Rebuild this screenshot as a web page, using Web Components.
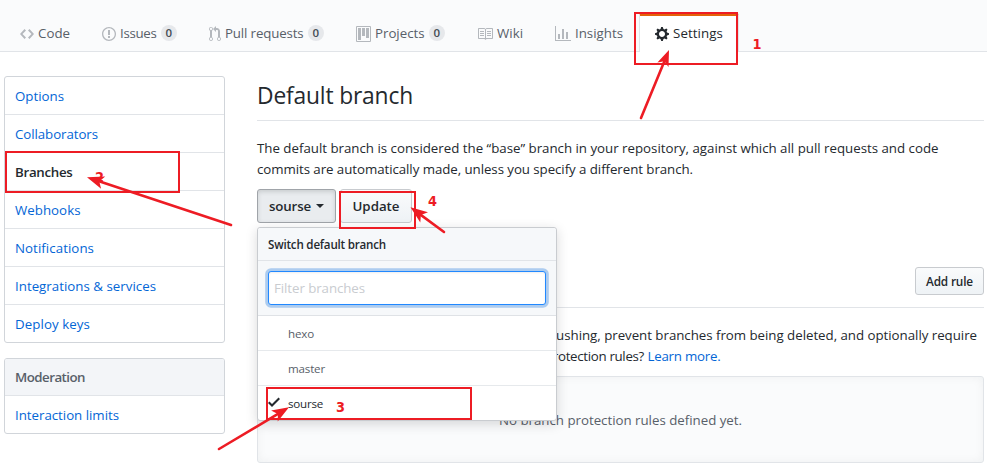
<!DOCTYPE html>
<html lang="en">
<head>
<meta charset="utf-8">
<title>Branches settings</title>
<style>
html,body{margin:0;padding:0}
body{width:987px;height:470px;overflow:hidden;background:#fff;color:#24292e;font:13.3px/21px "Open Sans","Noto Sans",sans-serif}
</style>
</head>
<body>
<settings-page></settings-page>
<script>
const ICONS = {
  code:[14,"M9.5 3L8 4.5 11.5 8 8 11.5 9.5 13 14 8 9.5 3zm-5 0L0 8l4.5 5L6 11.5 2.5 8 6 4.5 4.5 3z"],
  issue:[14,"M7 2.3c3.14 0 5.7 2.56 5.7 5.7s-2.56 5.7-5.7 5.7A5.71 5.71 0 0 1 1.3 8c0-3.14 2.56-5.7 5.7-5.7zM7 1C3.14 1 0 4.14 0 8s3.14 7 7 7 7-3.14 7-7-3.14-7-7-7zm1 3H6v5h2V4zm0 6H6v2h2v-2z"],
  pull:[12,"M11 11.28V5c-.03-.78-.34-1.47-.94-2.06C9.46 2.35 8.78 2.03 8 2H7V0L4 3l3 3V4h1c.27.02.48.11.69.31.21.2.3.42.31.69v6.28A1.993 1.993 0 0 0 10 15a1.993 1.993 0 0 0 1-3.72zm-1 2.92c-.66 0-1.2-.55-1.2-1.2 0-.65.55-1.2 1.2-1.2.65 0 1.2.55 1.2 1.2 0 .65-.55 1.2-1.2 1.2zM4 3c0-1.11-.89-2-2-2a1.993 1.993 0 0 0-1 3.72v6.56A1.993 1.993 0 0 0 2 15a1.993 1.993 0 0 0 1-3.72V4.72c.59-.34 1-.98 1-1.72zm-.8 10c0 .66-.55 1.2-1.2 1.2-.65 0-1.2-.55-1.2-1.2 0-.65.55-1.2 1.2-1.2.65 0 1.2.55 1.2 1.2zM2 4.2C1.34 4.2.8 3.65.8 3c0-.65.55-1.2 1.2-1.2.65 0 1.2.55 1.2 1.2 0 .65-.55 1.2-1.2 1.2z"],
  project:[15,"M10 12h3V2h-3v10zm-4-2h3V2H6v8zm-4 4h3V2H2v12zm-1 1h13V1H1v14zM14 0H1a1 1 0 0 0-1 1v14a1 1 0 0 0 1 1h13a1 1 0 0 0 1-1V1a1 1 0 0 0-1-1z"],
  book:[16,"M3 5h4v1H3V5zm0 3h4V7H3v1zm0 2h4V9H3v1zm11-5h-4v1h4V5zm0 2h-4v1h4V7zm0 2h-4v1h4V9zm2-6v9c0 .55-.45 1-1 1H9.5l-1 1-1-1H2c-.55 0-1-.45-1-1V3c0-.55.45-1 1-1h5.5l1 1 1-1H15c.55 0 1 .45 1 1zm-8 .5L7.5 3H2v9h6V3.5zm7-.5H9.5l-.5.5V12h6V3z"],
  graph:[16,"M16 14v1H0V0h1v14h15zM5 13H3V8h2v5zm4 0H7V3h2v10zm4 0h-2V6h2v7z"],
  gear:[14,"M14 8.77v-1.6l-1.94-.64-.45-1.09.88-1.84-1.13-1.13-1.81.91-1.09-.45-.69-1.92h-1.6l-.63 1.94-1.11.45-1.84-.88-1.13 1.13.91 1.81-.45 1.09L0 7.23v1.59l1.94.64.45 1.09-.88 1.84 1.13 1.13 1.81-.91 1.09.45.69 1.92h1.59l.63-1.94 1.11-.45 1.84.88 1.13-1.13-.92-1.81.47-1.09L14 8.75v.02zM7 11c-1.66 0-3-1.34-3-3s1.34-3 3-3 3 1.34 3 3-1.34 3-3 3z"],
  check:[12,"M12 5l-8 8-4-4 1.5-1.5L4 10l6.5-6.5L12 5z"]
};
const define = (name, html) => customElements.define(name, class extends HTMLElement {
  constructor(){
    super();
    this.attachShadow({mode:"open"}).innerHTML = typeof html === "function" ? html(this) : html;
  }
});

customElements.define("oct-icon", class extends HTMLElement {
  connectedCallback(){
    if (this.shadowRoot) return;
    const [w,d] = ICONS[this.getAttribute("name")];
    this.attachShadow({mode:"open"}).innerHTML =
      `<style>:host{display:block;flex:none;width:${w}px;height:16px}svg{display:block;fill:currentColor}</style>
       <svg width="${w}" height="16" viewBox="0 0 ${w} 16"><path fill-rule="evenodd" d="${d}"/></svg>`;
  }
});

define("nav-tab", `<style>
:host{display:flex;align-items:center;gap:4px;box-sizing:border-box;height:39px;padding:5px 16px 0;color:#586069}
::slotted(oct-icon){color:#b4b8bd}
::slotted(fit-text),::slotted(count-badge){margin-top:-2px}
:host([active]){background:#fff;color:#24292e;border:1px solid #e1e4e8;border-top:3px solid #e36209;border-bottom:0;border-radius:3px 3px 0 0;padding:0 15px}
:host([active]) ::slotted(oct-icon){color:#24292e}
</style><slot></slot>`);

define("count-badge", `<style>
:host{display:block;width:16.5px;height:16px;border-radius:8px;background:#e6e8eb;color:#444d56;font-size:11.5px;font-weight:600;line-height:16px;text-align:center}
</style><slot></slot>`);

define("side-menu", `<style>
:host{display:block;border:1px solid #d1d5da;border-radius:3px;overflow:hidden;background:#fff}
</style><slot></slot>`);

define("menu-item", `<style>
:host{display:block;height:37px;line-height:39px;padding-left:10px;color:#0366d6;border-bottom:1px solid #e1e4e8}
:host(:last-child){border-bottom:0}
:host([selected]){color:#24292e;font-weight:600}
:host([heading]){height:36px;line-height:37px;background:#f3f5f8;color:#586069;font-weight:600}
</style><slot></slot>`);

define("push-button", `<style>
:host{display:flex;align-items:center;justify-content:center;gap:5px;box-sizing:border-box;height:34px;border:1px solid #c8cbcf;border-radius:3px;background:linear-gradient(#fafbfc,#eff3f6 90%);font-weight:600;line-height:20px}
:host([pressed]){background:#e9ecef;border-color:#a0a4a9;box-shadow:inset 0 2px 4px rgba(27,31,35,.15)}
:host([small]){height:28px;font-size:11.8px}
i{display:none;border:4px solid transparent;border-top-color:currentColor;border-bottom:0}
:host([pressed]) i{display:block}
</style><slot></slot><i></i>`);

define("branch-option", `<style>
:host{display:flex;align-items:center;height:34px;padding-left:10px;border-bottom:1px solid #e6e9ec;color:#586069;font-size:11.6px}
:host(:last-child){border-bottom:0}
:host([selected]){color:#24292e}
span{width:20px;height:19px}
</style><span><slot name="icon"></slot></span><slot></slot>`);

define("branch-picker", `<style>
:host{display:block;box-sizing:border-box;width:300px;height:194px;border:1px solid #c9ccd0;border-radius:3px;background:#fff;box-shadow:0 3px 12px rgba(27,31,35,.17)}
header{height:32px;line-height:34px;padding-left:10px;background:#f6f8fa;border-bottom:1px solid #e1e4e8;font-size:11.6px;font-weight:600;border-radius:3px 3px 0 0}
.filter{padding:10px;background:#f6f8fa;border-bottom:1px solid #dfe2e6}
.field{box-sizing:border-box;height:34px;line-height:32px;padding-left:5px;border:1px solid #2188ff;border-radius:3px;background:#fff;box-shadow:inset 0 1px 2px rgba(27,31,35,.075),0 0 0 2.8px rgba(3,102,214,.3);color:#c9ccd0}
</style>
<header><fit-text w="118">Switch default branch</fit-text></header>
<div class="filter"><div class="field"><fit-text w="91">Filter branches</fit-text></div></div>
<branch-option><fit-text w="26">hexo</fit-text></branch-option>
<branch-option><fit-text w="37">master</fit-text></branch-option>
<branch-option selected><oct-icon slot="icon" name="check"></oct-icon><fit-text w="35">sourse</fit-text></branch-option>`);

define("blank-slate", `<style>
:host{display:flex;align-items:center;justify-content:center;box-sizing:border-box;height:87px;padding-top:2px;border:1px solid #e1e4e8;border-radius:3px;background:#fafbfc;box-shadow:inset 0 0 10px rgba(27,31,35,.05);color:#586069}
</style><slot></slot>`);

/* Red call-outs drawn over the page: frames, arrows and step numbers. */
define("callout-layer", () => {
  const arrow = (x1,y1,x2,y2,len=17,half=6.5) => {
    const L=Math.hypot(x2-x1,y2-y1), ux=(x2-x1)/L, uy=(y2-y1)/L;
    const p=(b,s)=>`${(x2-ux*b-uy*s).toFixed(1)},${(y2-uy*b+ux*s).toFixed(1)}`;
    return `<path d="M${x1} ${y1}L${p(len*.7,0)}" stroke-width="2.6" stroke-linecap="round"/><polygon points="${x2},${y2} ${p(len,half)} ${p(len*.76,0)} ${p(len,-half)}" fill="#ed1c24" stroke="none"/>`;
  };
  return `<style>
:host{position:absolute;inset:0;z-index:3;pointer-events:none}
svg{display:block}
text{font:bold 14px "DejaVu Sans",sans-serif;fill:#ed1c24;stroke:none}
</style><svg width="987" height="470" fill="none" stroke="#ed1c24" stroke-width="2">
<text x="752.5" y="49" textLength="9" lengthAdjust="spacingAndGlyphs">1</text><text x="95" y="182" textLength="9" lengthAdjust="spacingAndGlyphs">2</text><text x="336" y="412" textLength="9" lengthAdjust="spacingAndGlyphs">3</text><text x="428" y="206" textLength="9" lengthAdjust="spacingAndGlyphs">4</text>
<rect x="635" y="13" width="102" height="51"/>
<rect x="6" y="152" width="173" height="40"/>
<rect x="340" y="192" width="75" height="36"/>
<rect x="267" y="388" width="204" height="31"/>
${arrow(641,118,669,50,16,6)}${arrow(231,225,87,177.3)}${arrow(444,232,410.5,207.3)}${arrow(219,449,289,407.3)}
</svg>`;
});

define("settings-page", `<style>
:host{display:flex;flex-direction:column;position:relative;width:987px;height:470px;overflow:hidden}
nav{display:flex;align-items:flex-end;box-sizing:border-box;height:52px;padding-left:4px;background:#fafbfc;border-bottom:1px solid #e1e4e8}
nav nav-tab[active]{margin-bottom:-1px}
.body{display:flex;gap:32px;padding:24px 3px 0 4px}
aside{display:flex;flex-direction:column;gap:15px;width:221px}
main{flex:1;min-width:0}
h2{margin:0;height:44px;line-height:39px;border-bottom:1px solid #e1e4e8;font-size:22.8px;font-weight:400}
p{margin:0}
.intro{padding-top:17px;height:51px}
.row{display:flex;gap:4px;position:relative}
branch-picker{position:absolute;left:0;top:38px;z-index:2}
.rules{display:flex;justify-content:flex-end;height:40px;margin-top:44px;border-bottom:1px solid #e1e4e8}
.note{padding:17px 0 9px 291px}
.note p:last-child{margin-left:-3px}
a{color:#0366d6}
</style>
<nav>
<nav-tab><oct-icon name="code"></oct-icon><fit-text w="32">Code</fit-text></nav-tab>
<nav-tab><oct-icon name="issue"></oct-icon><fit-text w="36.5">Issues</fit-text><count-badge>0</count-badge></nav-tab>
<nav-tab><oct-icon name="pull"></oct-icon><fit-text w="78.5">Pull requests</fit-text><count-badge>0</count-badge></nav-tab>
<nav-tab><oct-icon name="project"></oct-icon><fit-text w="49.5">Projects</fit-text><count-badge>0</count-badge></nav-tab>
<nav-tab><oct-icon name="book"></oct-icon><fit-text w="26">Wiki</fit-text></nav-tab>
<nav-tab><oct-icon name="graph"></oct-icon><fit-text w="48">Insights</fit-text></nav-tab>
<nav-tab active><oct-icon name="gear"></oct-icon><fit-text w="50">Settings</fit-text></nav-tab>
</nav>
<div class="body">
<aside>
<side-menu>
<menu-item><fit-text w="49">Options</fit-text></menu-item>
<menu-item><fit-text w="83">Collaborators</fit-text></menu-item>
<menu-item selected><fit-text w="57.5">Branches</fit-text></menu-item>
<menu-item><fit-text w="65.5">Webhooks</fit-text></menu-item>
<menu-item><fit-text w="79">Notifications</fit-text></menu-item>
<menu-item><fit-text w="141">Integrations &amp; services</fit-text></menu-item>
<menu-item><fit-text w="75">Deploy keys</fit-text></menu-item>
</side-menu>
<side-menu>
<menu-item heading><fit-text w="70">Moderation</fit-text></menu-item>
<menu-item><fit-text w="104">Interaction limits</fit-text></menu-item>
</side-menu>
</aside>
<main>
<h2><fit-text w="156">Default branch</fit-text></h2>
<div class="intro">
<p><fit-text w="681.5">The default branch is considered the “base” branch in your repository, against which all pull requests and code</fit-text></p>
<p><fit-text w="436">commits are automatically made, unless you specify a different branch.</fit-text></p>
</div>
<div class="row">
<push-button pressed style="width:79px"><fit-text w="42">sourse</fit-text></push-button>
<push-button style="width:72px"><fit-text w="47">Update</fit-text></push-button>
<branch-picker></branch-picker>
</div>
<div class="rules"><push-button small style="width:69px"><fit-text w="47">Add rule</fit-text></push-button></div>
<div class="note">
<p><fit-text w="429">pushing, prevent branches from being deleted, and optionally require</fit-text></p>
<p><fit-text w="99">protection rules?</fit-text> <a><fit-text w="73">Learn more.</fit-text></a></p>
</div>
<blank-slate><fit-text w="243">No branch protection rules defined yet.</fit-text></blank-slate>
</main>
</div>
<callout-layer></callout-layer>`);

/* One line of text whose tracking is adjusted to fill the width given in "w". */
customElements.define("fit-text", class extends HTMLElement {
  connectedCallback(){
    if (this.shadowRoot) return;
    const w = parseFloat(this.getAttribute("w"));
    this.attachShadow({mode:"open"}).innerHTML =
      `<style>:host{display:inline-block;width:${w}px;white-space:pre;vertical-align:top}span{display:inline-block;font-variant-ligatures:none}</style><span><slot></slot></span>`;
    const s = this.shadowRoot.querySelector("span");
    s.style.letterSpacing = (w - s.getBoundingClientRect().width) / this.textContent.length + "px";
  }
});
</script>
</body>
</html>
